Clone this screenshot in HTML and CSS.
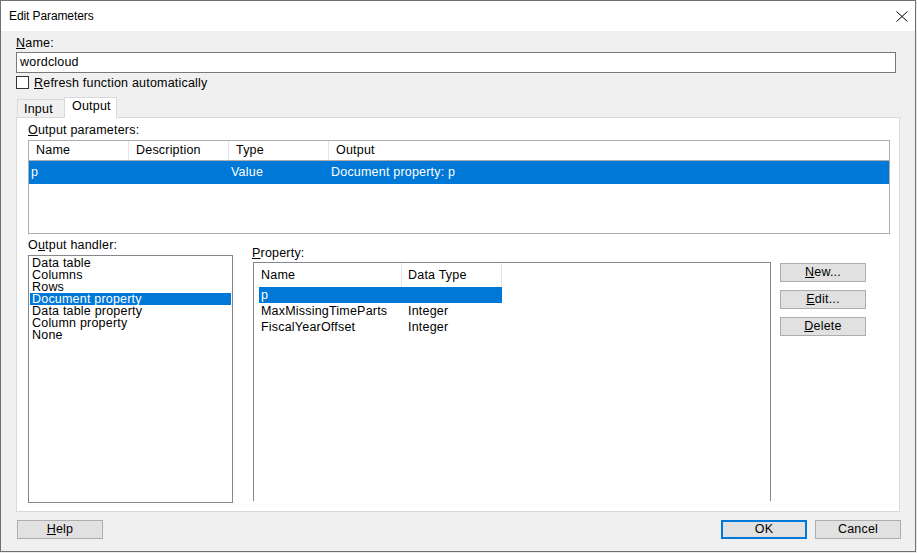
FILE: index.html
```html
<!DOCTYPE html>
<html>
<head>
<meta charset="utf-8">
<title>Edit Parameters</title>
<link rel="stylesheet" href="styles.css">
</head>
<body>
<div class="window">
  <div class="titlebar">
    <span class="title">Edit Parameters</span>
    <svg class="close" width="12" height="11" viewBox="0 0 12 11"><path d="M0.5 0.5 L11.5 10.5 M11.5 0.5 L0.5 10.5" stroke="#000" stroke-width="1" fill="none"/></svg>
  </div>
  <div class="body">
    <div class="lbl name-lbl"><u>N</u>ame:</div>
    <div class="textbox">wordcloud</div>
    <div class="check-row"><span class="checkbox"></span><span><u>R</u>efresh function automatically</span></div>
    <div class="tabs">
      <div class="tab">Input</div>
      <div class="tab active">Output</div>
    </div>
    <div class="panel">
      <div class="lbl small"><u>O</u>utput parameters:</div>
      <div class="lv out-lv">
        <div class="lv-head">
          <div class="hc">Name</div>
          <div class="hc">Description</div>
          <div class="hc">Type</div>
          <div class="hc last">Output</div>
        </div>
        <div class="lv-row sel">
          <div class="rc">p</div>
          <div class="rc"></div>
          <div class="rc">Value</div>
          <div class="rc last">Document property: p</div>
        </div>
      </div>
      <div class="lower">
        <div class="handler-col">
          <div class="lbl small h-lbl">O<u>u</u>tput handler:</div>
          <div class="listbox">
            <div class="lb-item">Data table</div>
            <div class="lb-item">Columns</div>
            <div class="lb-item">Rows</div>
            <div class="lb-item sel">Document property</div>
            <div class="lb-item">Data table property</div>
            <div class="lb-item">Column property</div>
            <div class="lb-item">None</div>
          </div>
        </div>
        <div class="prop-col">
          <div class="lbl small p-lbl"><u>P</u>roperty:</div>
          <div class="prop-lv">
            <div class="prop-head">
              <div class="ph c1">Name</div>
              <div class="ph c2">Data Type</div>
            </div>
            <div class="prop-row sel"><div class="pc c1">p</div><div class="pc c2"></div></div>
            <div class="prop-row"><div class="pc c1">MaxMissingTimeParts</div><div class="pc c2">Integer</div></div>
            <div class="prop-row"><div class="pc c1">FiscalYearOffset</div><div class="pc c2">Integer</div></div>
          </div>
        </div>
        <div class="btn-col">
          <div class="btn"><u>N</u>ew...</div>
          <div class="btn"><u>E</u>dit...</div>
          <div class="btn"><u>D</u>elete</div>
        </div>
      </div>
    </div>
    <div class="footer">
      <div class="btn"><u>H</u>elp</div>
      <div class="spacer"></div>
      <div class="btn ok">OK</div>
      <div class="btn">Cancel</div>
    </div>
  </div>
</div>
</body>
</html>
```

FILE: styles.css
```css
* { box-sizing: border-box; }
html, body { margin: 0; padding: 0; }
body {
  background: #eaeaea;
  font-family: "Liberation Sans", Arial, sans-serif;
  font-size: 12.5px;
  color: #000;
  letter-spacing: 0.2px;
}
u { text-decoration: underline; text-underline-offset: 1px; }

.window {
  width: 916px;
  height: 552px;
  border: 1px solid #707070;
  background: #f0f0f0;
  display: flex;
  flex-direction: column;
}
.titlebar {
  height: 30px;
  flex: none;
  background: #fff;
  display: flex;
  align-items: center;
  justify-content: space-between;
  padding: 0 7px 0 8px;
}
.title { font-size: 12px; letter-spacing: -0.1px; }
.close { display: block; margin-top: 1px; }

.body {
  flex: 1;
  padding: 3px 14px 0 15px;
  display: flex;
  flex-direction: column;
}
.lbl { height: 18px; line-height: 18px; }
.lbl.small { height: 16px; line-height: 16px; }

.textbox {
  width: 880px;
  height: 21px;
  border: 1px solid #7a7a7a;
  background: #fff;
  padding-left: 3px;
  line-height: 18px;
}
.check-row {
  margin-top: 3px;
  height: 13px;
  display: flex;
  align-items: center;
}
.checkbox {
  width: 13px;
  height: 13px;
  border: 1px solid #333;
  background: #fff;
  margin-right: 5px;
}

.tabs {
  margin-top: 8px;
  height: 20px;
  display: flex;
  align-items: flex-end;
  padding-left: 1px;
  position: relative;
  z-index: 1;
}
.tab {
  height: 18px;
  width: 48px;
  border: 1px solid #d9d9d9;
  border-bottom: none;
  background: #f0f0f0;
  padding-left: 6px;
  line-height: 18px;
}
.tab.active {
  height: 21px;
  width: 53px;
  margin-left: -1px;
  margin-bottom: -1px;
  background: #fff;
  padding-left: 7px;
  line-height: 17px;
}

.panel {
  width: 884px;
  height: 395px;
  border: 1px solid #d9d9d9;
  background: #fff;
  padding: 4px 9px 0 11px;
}
.out-lv {
  margin-top: 2px;
  width: 862px;
  height: 94px;
  border: 1px solid #adadad;
}
.lv-head {
  display: flex;
  height: 20px;
  border-bottom: 1px solid #adadad;
}
.hc {
  width: 100px;
  border-right: 1px solid #e5e5e5;
  padding-left: 7px;
  line-height: 19px;
}
.hc.last { flex: 1; border-right: none; }
.lv-row {
  display: flex;
  height: 23px;
  line-height: 23px;
}
.lv-row.sel { background: #0078d7; color: #fff; }
.rc { width: 100px; padding-left: 2px; }
.rc.last { flex: 1; }

.lower {
  display: flex;
  margin-top: 3px;
}
.handler-col { width: 205px; }
.h-lbl { margin-bottom: 2px; }
.listbox {
  height: 248px;
  border: 1px solid #828790;
  padding-top: 1px;
}
.lb-item {
  margin-left: 1px;
  width: 201px;
  height: 12px;
  line-height: 12px;
  padding-left: 2px;
}
.lb-item.sel { background: #0078d7; color: #fff; }

.prop-col {
  margin-left: 19px;
  width: 519px;
  padding-top: 8px;
}
.p-lbl { margin-bottom: 1px; }
.prop-lv {
  margin-left: 1px;
  width: 518px;
  height: 239px;
  border: 1px solid #828790;
  border-bottom: none;
}
.prop-head {
  display: flex;
  height: 24px;
}
.ph { line-height: 24px; border-right: 1px solid #e5e5e5; }
.ph.c1 { width: 148px; padding-left: 7px; }
.ph.c2 { width: 100px; padding-left: 6px; }
.prop-row {
  display: flex;
  margin-left: 5px;
  width: 243px;
  height: 16px;
  line-height: 16px;
}
.prop-row.sel { background: #0078d7; color: #fff; }
.pc.c1 { width: 143px; padding-left: 2px; }
.pc.c2 { width: 100px; padding-left: 6px; }

.btn-col {
  margin-left: 9px;
  padding-top: 26px;
  display: flex;
  flex-direction: column;
  gap: 8px;
}
.btn {
  width: 86px;
  height: 19px;
  background: #e1e1e1;
  border: 1px solid #adadad;
  text-align: center;
  line-height: 17px;
}
.btn.ok {
  border: 2px solid #0078d7;
  line-height: 15px;
}

.footer {
  margin-top: 8px;
  display: flex;
  gap: 8px;
  padding-left: 1px;
}
.spacer { flex: 1; }
```
